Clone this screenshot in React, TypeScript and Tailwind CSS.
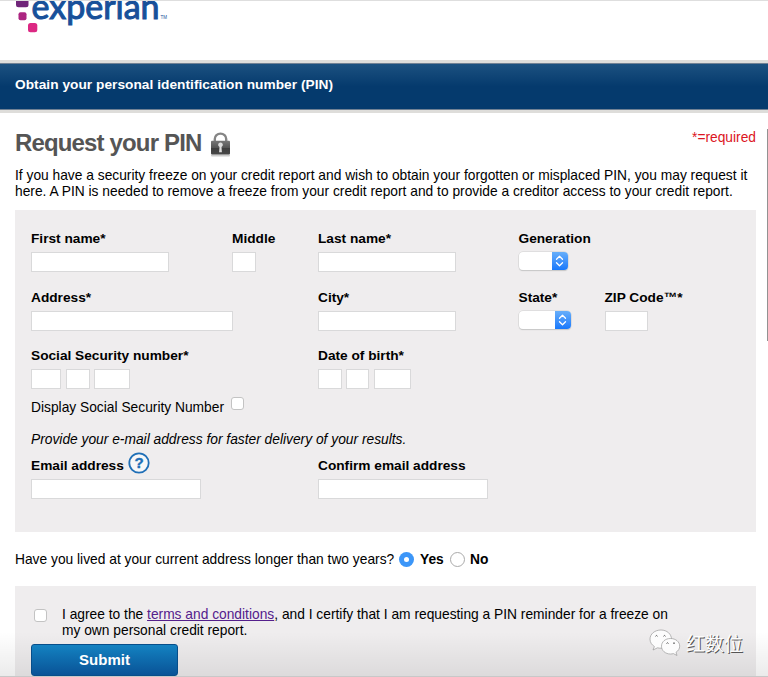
import type { ReactNode } from "react";

const LABEL = "h-4 whitespace-nowrap text-[13.7px] leading-4 font-bold";

function Box({ className }: { className: string }) {
  return <input className={`block h-5 border border-[#d9d9da] bg-white outline-none ${className}`} />;
}

function Field({ label, className = "", children }: { label: ReactNode; className?: string; children: ReactNode }) {
  return (
    <div className={`shrink-0 ${className}`}>
      <div className={LABEL}>{label}</div>
      <div className="mt-[5px] flex">{children}</div>
    </div>
  );
}

function Picker({ className }: { className: string }) {
  return (
    <div className={`flex h-[18px] justify-end overflow-hidden rounded-[4px] bg-white shadow-[0_0_0_0.5px_#cfcfcf,0_1px_1px_#bfbfbf] ${className}`}>
      <div className="flex w-[15.5px] items-center justify-center bg-gradient-to-b from-[#66aefa] to-[#1678fb]">
        <svg width="9" height="12" viewBox="0 0 9 12" fill="none" stroke="white" strokeWidth="1.3" strokeLinecap="round" strokeLinejoin="round">
          <path d="M1.5 4.2 4.5 1.2l3 3M1.5 7.8l3 3 3-3" />
        </svg>
      </div>
    </div>
  );
}

function Check({ className }: { className: string }) {
  return <div className={`h-[13px] w-[13px] shrink-0 rounded-[3px] border border-[#c3c3c3] bg-white ${className}`} />;
}

function Header() {
  return (
    <header className="h-[60px] overflow-hidden border-t border-[#dedede] bg-white">
      <svg className="block" width="180" height="40" viewBox="0 1 180 40">
        <rect x="16" y="-4" width="12.5" height="11.3" rx="2.5" fill="#702579" />
        <rect x="18.5" y="12.2" width="8" height="8" rx="2" fill="#ac2581" />
        <rect x="28" y="23" width="9.3" height="9.3" rx="2.5" fill="#dc2883" />
        <text x="31.5" y="18.7" textLength="128" lengthAdjust="spacingAndGlyphs" fontFamily="Lato, sans-serif" fontSize="35.5" fill="#17509a" stroke="#17509a" strokeWidth="1.1">experian</text>
        <text x="160.5" y="18.5" fontFamily="Liberation Sans, sans-serif" fontSize="4.5" fill="#17509a">TM</text>
      </svg>
    </header>
  );
}

function Lock() {
  return (
    <svg className="ml-[10px] mt-[13px] shrink-0" width="22" height="26" viewBox="0 0 22 26">
      <defs>
        <linearGradient id="lock" x1="0" x2="0" y1="0" y2="1">
          <stop offset="0" stopColor="#777" />
          <stop offset=".5" stopColor="#555" />
          <stop offset=".52" stopColor="#3d3d3d" />
          <stop offset="1" stopColor="#484848" />
        </linearGradient>
      </defs>
      <rect x="1" y="22.5" width="19" height="2" rx="1" fill="#ccc" />
      <path d="M4.8 11V7a5.7 5.4 0 0 1 11.400 0V11" fill="none" stroke="#858585" strokeWidth="2.4" />
      <rect x="1" y="8.800" width="19" height="13.700" rx="1" fill="url(#lock)" />
      <path d="M10.5 10.500a2.300 2.300 0 0 1 1 4.400l.4 5.300H9.100l.4-5.300a2.300 2.300 0 0 1 1-4.400Z" fill="#ddd" />
    </svg>
  );
}

function Watermark() {
  return (
    <div className="absolute top-[628px] left-[648px] flex items-center">
      <svg width="34" height="30" viewBox="0 0 34 30" fill="#fcfcfc" stroke="#999" strokeWidth=".7">
        <path d="M13 2C6.7 2 2 6 2 11.2c0 3 1.7 5.7 4.4 7.3L5 22l4.5-2.200c1.100.3 2.300.4 3.500.4 6 0 10.500-4 10.500-9S19 2 13 2Z" />
        <path d="M22.5 10.500c-5.200 0-9 3.300-9 7.700s3.800 7.800 9 7.800c1 0 2-.1 2.900-.4L29 27.500l-1-3.200c2.300-1.500 3.700-3.600 3.700-6.100 0-4.400-4-7.700-9.200-7.700Z" />
        <path d="M7.500 8.300q1-1.700 2 0M15.500 8.300q1-1.700 2 0M18.500 15.500q1-1.500 2 0M25 15.500q1-1.500 2 0" fill="none" stroke="#555" strokeWidth="1" />
      </svg>
      <span className="ml-1 font-['Noto_Sans_CJK_SC',sans-serif] text-[19px] leading-7 whitespace-nowrap text-[#fcfcfc] [text-shadow:1px_1px_0_#555]">红数位</span>
    </div>
  );
}

export default function App() {
  return (
    <div className="relative h-[677px] w-[768px] overflow-hidden bg-white font-['Liberation_Sans',Arial,sans-serif] text-[13.79px] leading-4 text-black">
      <Header />
      <div className="h-[53px] border-y-[3px] border-[#deddda]">
        <div className="flex h-[47px] items-center border-y border-[#718194] bg-gradient-to-b from-[#1b5180] via-[#053a6d] to-[#053a6d] pl-[15px] text-[13.7px] font-bold tracking-[0.035px] text-white">
          <span className="-mt-[3px]">Obtain your personal identification number (PIN)</span>
        </div>
      </div>

      <main className="ml-[15px] w-[741px]">
        <div className="flex h-[55px]">
          <h1 className="mt-[16px] text-[24px] leading-7 font-bold tracking-[-0.85px] whitespace-nowrap text-[#555]">Request your PIN</h1>
          <div className="mt-[6px] -ml-px"><Lock /></div>
          <span className="mt-[17px] ml-auto text-[#dc1523]">*=required</span>
        </div>
        <p className="h-[42px] whitespace-nowrap">
          <span className="block">If you have a security freeze on your credit report and wish to obtain your forgotten or misplaced PIN, you may request it</span>
          <span className="block">here. A PIN is needed to remove a freeze from your credit report and to provide a creditor access to your credit report.</span>
        </p>

        <section className="h-[322px] bg-[#efedee] pt-[21px] pl-4">
          <div className="flex h-[58.5px]">
            <Field label="First name*" className="w-[201px]"><Box className="w-[138px]" /></Field>
            <Field label="Middle" className="w-[86px]"><Box className="w-6" /></Field>
            <Field label="Last name*" className="w-[200.5px]"><Box className="w-[138px]" /></Field>
            <Field label="Generation"><Picker className="w-[49px]" /></Field>
          </div>
          <div className="flex h-[58.5px]">
            <Field label="Address*" className="w-[287px]"><Box className="w-[202px]" /></Field>
            <Field label="City*" className="w-[200.5px]"><Box className="w-[138px]" /></Field>
            <Field label="State*" className="w-[86px]"><Picker className="w-[52px]" /></Field>
            <Field label="ZIP Code™*"><Box className="w-[43px]" /></Field>
          </div>
          <div className="flex h-[46px]">
            <Field label="Social Security number*" className="w-[287px]">
              <Box className="w-[30px]" /><Box className="ml-[5px] w-6" /><Box className="ml-1 w-9" />
            </Field>
            <Field label="Date of birth*">
              <Box className="w-6" /><Box className="ml-1 w-[23px]" /><Box className="ml-[5px] w-[37px]" />
            </Field>
          </div>
          <div className="flex h-[38px]">
            <span className="mt-[6px] w-[200px] whitespace-nowrap">Display Social Security Number</span>
            <Check className="mt-[3px]" />
          </div>
          <div className="h-[26px] whitespace-nowrap italic">Provide your e-mail address for faster delivery of your results.</div>
          <div className="flex">
            <Field
              className="w-[287px]"
              label={
                <span className="flex">
                  Email address
                  <svg className="-mt-[6px] ml-1" width="22" height="22" viewBox="0 0 22 22">
                    <circle cx="11" cy="11" r="9.7" fill="#f7f7f8" stroke="#1f6fb7" strokeWidth="1.8" />
                    <text x="11" y="16.2" textAnchor="middle" fontSize="15" fontWeight="700" fill="#1f6fb7" stroke="#1f6fb7" strokeWidth=".4">?</text>
                  </svg>
                </span>
              }
            >
              <Box className="w-[170px]" />
            </Field>
            <Field label="Confirm email address"><Box className="w-[170px]" /></Field>
          </div>
        </section>

        <div className="flex h-[54px] items-center pt-[2px] whitespace-nowrap">
          <span className="w-[384px]">Have you lived at your current address longer than two years?</span>
          <span className="-mt-px flex h-[15px] w-[15px] items-center justify-center rounded-full bg-[#3c96f8]"><i className="h-[5px] w-[5px] rounded-full bg-white" /></span>
          <b className="ml-[6px] w-[30px]">Yes</b>
          <span className="-mt-px h-[15px] w-[15px] rounded-full border border-[#aaa] bg-white" />
          <b className="ml-[5px]">No</b>
        </div>

        <section className="h-[91px] bg-[#efedee] pt-[21px]">
          <div className="flex h-[37px]">
            <Check className="mt-[2px] ml-[19px]" />
            <p className="ml-[15px] whitespace-nowrap">
              I agree to the <a className="text-[#54208c] underline">terms and conditions</a>, and I certify that I am requesting a PIN reminder for a freeze on<br />
              my own personal credit report.
            </p>
          </div>
          <button className="relative z-10 ml-4 block h-8 w-[147px] rounded-[3px] border border-[#074e8a] bg-gradient-to-b from-[#1482c1] to-[#0a5397] text-[15px] font-bold text-white">Submit</button>
        </section>
      </main>

      <div className="absolute bottom-0 left-0 h-[45px] w-full bg-gradient-to-b from-transparent to-black/8" />
      <div className="absolute bottom-0 left-0 h-px w-full bg-[#c8c8c8]" />
      <div className="absolute top-[129px] right-0 h-[212px] w-px bg-[#929292]" />
      <Watermark />
    </div>
  );
}
